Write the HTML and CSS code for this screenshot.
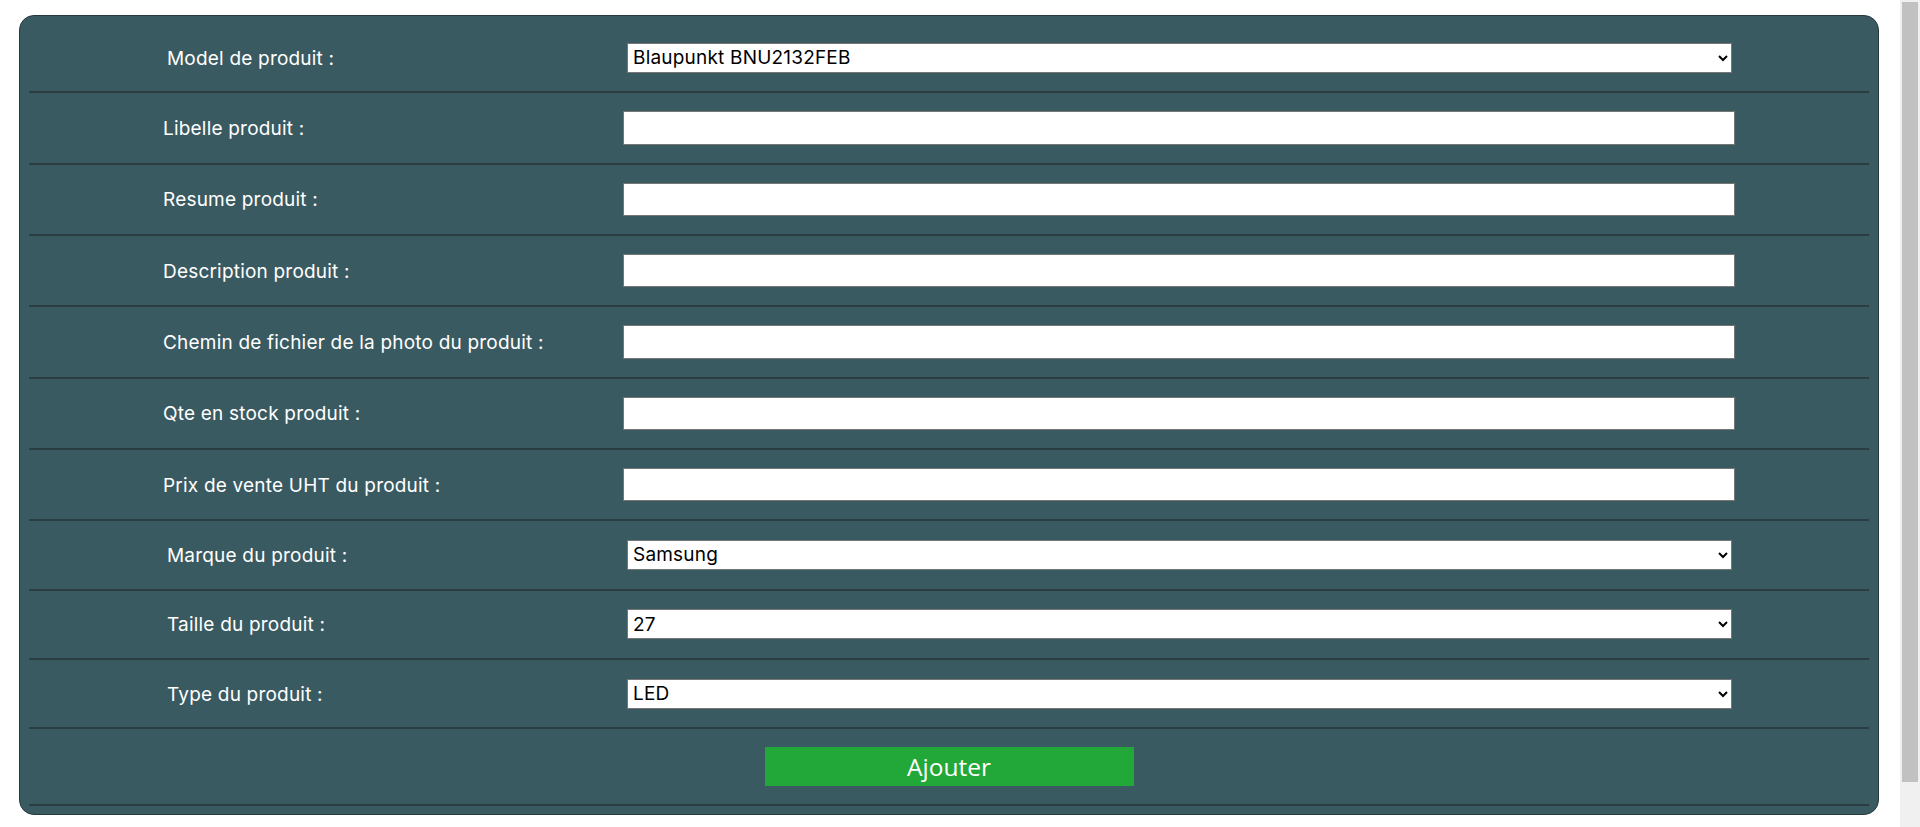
FILE: index.html
```html
<!DOCTYPE html>
<html lang="fr">
<head>
<meta charset="utf-8">
<title>Ajouter un produit</title>
<link rel="stylesheet" href="styles.css">
</head>
<body>
<div class="page">
  <form class="panel">
    <div class="row row--select">
      <label class="lbl" for="model">Model de produit :</label>
      <select id="model" class="sel"><option>Blaupunkt BNU2132FEB</option></select>
    </div>
    <div class="row">
      <label class="lbl" for="libelle">Libelle produit :</label>
      <input id="libelle" class="txt" type="text">
    </div>
    <div class="row">
      <label class="lbl" for="resume">Resume produit :</label>
      <input id="resume" class="txt" type="text">
    </div>
    <div class="row">
      <label class="lbl" for="desc">Description produit :</label>
      <input id="desc" class="txt" type="text">
    </div>
    <div class="row">
      <label class="lbl" for="photo">Chemin de fichier de la photo du produit :</label>
      <input id="photo" class="txt" type="text">
    </div>
    <div class="row">
      <label class="lbl" for="qte">Qte en stock produit :</label>
      <input id="qte" class="txt" type="text">
    </div>
    <div class="row">
      <label class="lbl" for="prix">Prix de vente UHT du produit :</label>
      <input id="prix" class="txt" type="text">
    </div>
    <div class="row row--select">
      <label class="lbl" for="marque">Marque du produit :</label>
      <select id="marque" class="sel"><option>Samsung</option></select>
    </div>
    <div class="row row--select">
      <label class="lbl" for="taille">Taille du produit :</label>
      <select id="taille" class="sel"><option>27</option></select>
    </div>
    <div class="row row--select">
      <label class="lbl" for="type">Type du produit :</label>
      <select id="type" class="sel"><option>LED</option></select>
    </div>
    <div class="row row--action">
      <button type="button" class="btn">Ajouter</button>
    </div>
  </form>
</div>
<div class="scrollbar" aria-hidden="true"><div class="scrollbar-thumb"></div></div>
</body>
</html>
```
FILE: styles.css
```css
html, body {
  margin: 0;
  padding: 0;
  background: #ffffff;
}

.page {
  padding: 15px 21px 10px 19px;
}

.panel {
  box-sizing: border-box;
  width: 1860px;
  margin: 0;
  background: #3a5a62;
  border: 1px solid #28393e;
  border-radius: 15px;
  padding: 8px 9px 8px 9px;
  font-family: "Inter", "Roboto", sans-serif;
  display: flex;
  flex-direction: column;
}

.row {
  display: flex;
  align-items: center;
  height: 69.33px;
  border-bottom: 2px solid #2a3d42;
}

.row--select {
  height: 67.33px;
  padding-left: 4px;
}

.row--action {
  height: 75px;
  justify-content: center;
}

.lbl {
  box-sizing: border-box;
  width: 594px;
  flex: 0 0 594px;
  padding-left: 134px;
  padding-top: 2px;
  color: #ffffff;
  font-size: 19px;
  letter-spacing: 0.2px;
  line-height: 22px;
}

.txt {
  box-sizing: border-box;
  width: 1112px;
  height: 33.33px;
  margin: 0;
  padding: 0 4px;
  border: 1px solid #767676;
  border-radius: 0;
  background: #ffffff;
  font-family: "Inter", "Roboto", sans-serif;
  font-size: 19px;
}

.sel {
  box-sizing: border-box;
  width: 1105px;
  height: 30px;
  margin: 0;
  padding: 0 0 0 1px;
  border: 1px solid #767676;
  border-radius: 0;
  background-color: #ffffff;
  color: #000000;
  font-family: "Inter", "Roboto", sans-serif;
  font-size: 19px;
  letter-spacing: 0.2px;
}

.btn {
  width: 369px;
  height: 39px;
  margin: 0;
  padding: 0;
  border: none;
  border-radius: 0;
  background: #22a838;
  color: #ffffff;
  font-family: "Open Sans", "Noto Sans", sans-serif;
  font-size: 24.5px;
  line-height: 39px;
  cursor: pointer;
}

.scrollbar {
  position: fixed;
  top: 0;
  right: 0;
  width: 20px;
  height: 100vh;
  background: #f0f0f0;
}

.scrollbar-thumb {
  margin: 2px 2px 0 2px;
  height: 780px;
  background: #c1c1c1;
}
```
